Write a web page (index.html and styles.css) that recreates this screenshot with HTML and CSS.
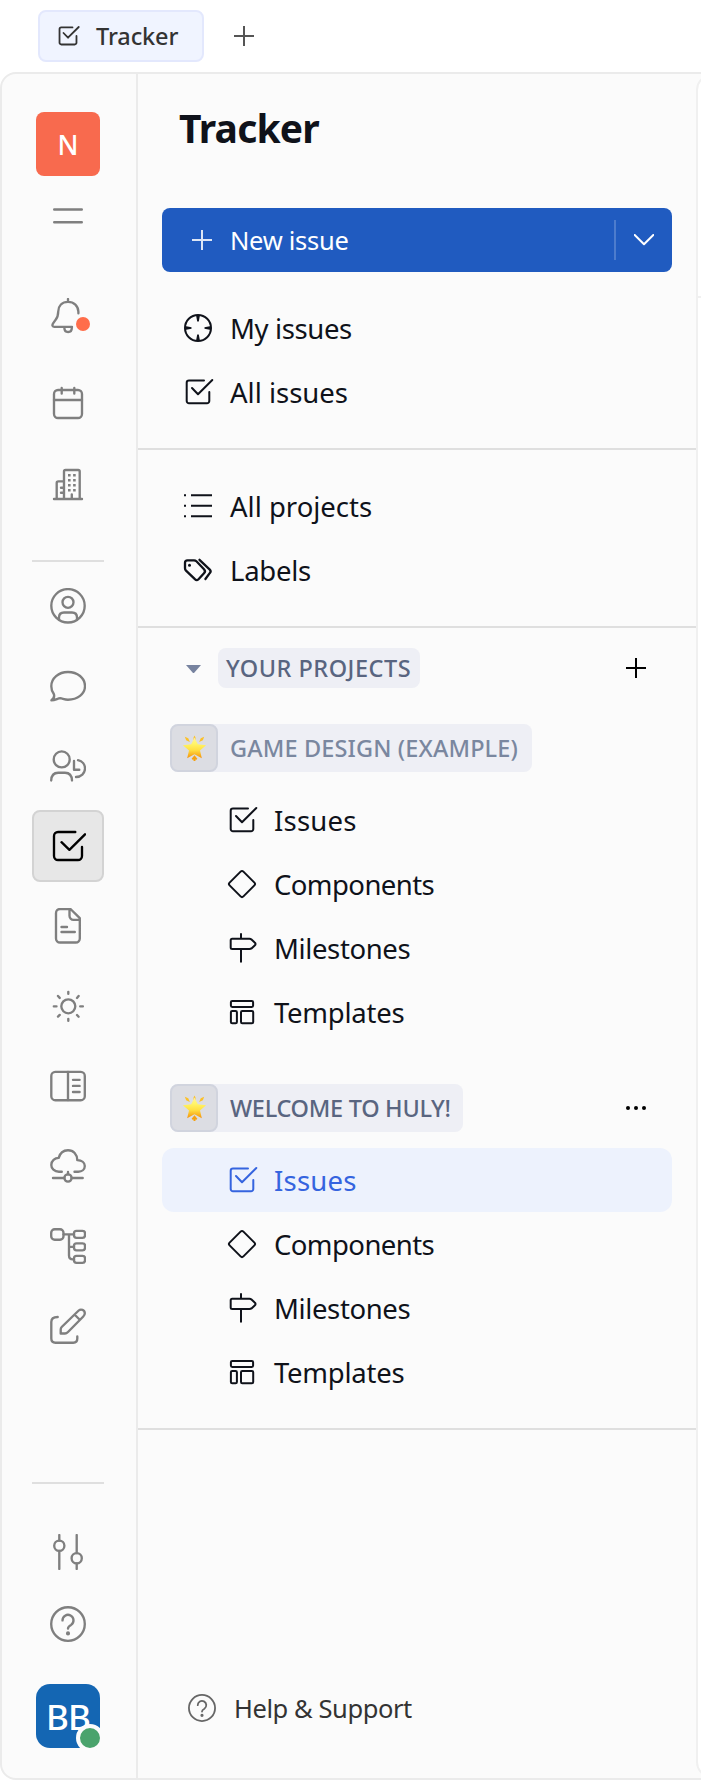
FILE: index.html
```html
<!DOCTYPE html>
<html lang="en">
<head>
<meta charset="utf-8">
<title>Tracker</title>
<link rel="stylesheet" href="styles.css">
</head>
<body>
<svg class="sprite" aria-hidden="true">
  <symbol id="check" viewBox="0 0 32 32"><path d="M22 4.5H7a2.3 2.3 0 0 0-2.3 2.3V25A2.3 2.3 0 0 0 7 27.3h18a2.3 2.3 0 0 0 2.3-2.3v-9M10 12l6 6.3L30.3 4"/></symbol>
  <symbol id="diamond" viewBox="0 0 32 32"><path d="M14.6 3.6q1.4-1.4 2.8 0l11 11q1.4 1.4 0 2.8l-11 11q-1.4 1.4-2.8 0l-11-11q-1.4-1.4 0-2.8z"/></symbol>
  <symbol id="milestone" viewBox="0 0 32 32"><path d="M15 2v4.7M15 17v12.7M6.2 6.7h17.3q1.2 0 2 .7l3.2 3q1.7 1.5 0 3l-3.2 3q-.8.6-2 .6H6.2q-1.5 0-1.5-1.5V8.2q0-1.5 1.5-1.5z"/></symbol>
  <symbol id="template" viewBox="0 0 32 32"><rect x="4.9" y="4.9" width="22.2" height="6" rx="1.3"/><rect x="4.9" y="15" width="6" height="12.2" rx="1.3"/><rect x="15" y="15" width="12.2" height="12.2" rx="1.3"/></symbol>
  <symbol id="help" viewBox="0 0 36 36"><circle cx="18" cy="18" r="16.8"/><path d="M12.5 14.4a5.5 5.5 0 1 1 8.6 4.5c-2 1.1-3.1 1.7-3.1 3.6"/><circle cx="18" cy="27.4" r=".9" fill="currentColor"/></symbol>
  <symbol id="plus" viewBox="0 0 20 20"><path d="M10 0v20M0 10h20"/></symbol>
  <symbol id="star" viewBox="0 0 28 28">
    <g stroke="none"><path fill="#f5a011" d="M12 25.700l-1-1L14 21l3 3.700-1 1-1-.4V27h-2v-1.700z"/><path fill="#fbc02a" d="M4 1.800l3.500 1.500 1.700 4L5.300 5.500zM24 1.800l-3.500 1.500-1.700 4 3.900-1.800zM13 2.500l1-2 1 2v3h-2z"/>
    <path fill="url(#gold)" d="M14 2.500l3.400 7.200 8.600.9-6.300 5.500 1.900 8-7.600-4.200-7.600 4.200 1.900-8L2 10.600l8.600-.9z"/></g>
  </symbol>
  <defs><linearGradient id="gold" x1="0" y1="0" x2="0" y2="1"><stop offset="0" stop-color="#fff2a0"/><stop offset=".3" stop-color="#fff568"/><stop offset=".6" stop-color="#ffe044"/><stop offset="1" stop-color="#f5920a"/></linearGradient></defs>
</svg>

<header class="tabbar">
  <div class="tab"><svg class="tab-icon"><use href="#check"/></svg><span>Tracker</span></div>
  <svg class="plus add-tab"><use href="#plus"/></svg>
</header>

<div class="frame">
  <nav class="rail">
    <div class="workspace">N</div>
    <svg class="menu" viewBox="0 0 36 20"><path d="M4.2 3.5h27.6M4.2 16.3h27.6"/></svg>
    <div class="group top">
      <div class="cell notify"><svg viewBox="0 0 36 36"><path d="M18 1v2.5M28.4 15.3V13.7C28.2 8 24 3.9 18 3.9S8.4 8 8.2 13.7c0 4.500-.5 5.500-2.700 8.200L3.100 25.400c-1.300 2-.6 3.500 1.400 3.500H22M14.400 29v1c0 2.600 1.500 4 3.700 4s3.700-1.400 3.700-4v-1"/></svg><i class="dot"></i></div>
      <div class="cell"><svg viewBox="0 0 36 36"><rect x="4" y="5" width="28" height="28" rx="4"/><path d="M4 15h28M11.700 3v5.500M24.300 3v5.500"/></svg></div>
      <div class="cell"><svg viewBox="0 0 36 36"><path d="M4 32h28M14 32V4.500Q14 3 15.500 3h12.700q1.500 0 1.500 1.500V32M6.700 32V16q0-1.600 1.600-1.600H14M11 20.700h3M11 25.700h3M21.800 27.300V32"/><path class="windows" d="M18 8.300h2.600m2.500 0h2.600M18 13.300h2.600m2.500 0h2.600M18 18.300h2.600m2.500 0h2.600M18 23.300h2.600m2.500 0h2.600"/></svg></div>
    </div>
    <div class="rule"></div>
    <div class="group apps">
      <div class="cell"><svg viewBox="0 0 36 36"><circle cx="18" cy="17.800" r="16.700"/><circle cx="18" cy="14.300" r="5.500"/><path d="M9 31.500V29.500q0-5 5-5h8q5 0 5 5v2"/></svg></div>
      <div class="cell"><svg viewBox="0 0 36 36"><path d="M1.400 32.200C4.500 30.200 4.600 28 3.700 25.800C2 23.500 1.300 21 1.300 18.200C1.300 10.200 8.500 4 18 4S35 10 35 18S27.500 31.700 18 31.700c-3.500 0-5.500-1.300-7.800-1.500c-2.700.2-4.700 2-8.800 2z"/></svg></div>
      <div class="cell"><svg viewBox="0 0 36 36"><circle cx="11.700" cy="11.400" r="8"/><path d="M1.200 32.500c.2-5.500 2.800-7.800 7-7.800H15c4.200 0 6.800 2.300 7 7.800M24 13v8.700h5.300M28 12.200c4.500 1 7 4.500 7 8.200 0 5-4 8.600-9 8.600"/></svg></div>
      <div class="cell active"><svg viewBox="0 0 36 36"><path d="M25.300 4H8a4 4 0 0 0-4 4v20a4 4 0 0 0 4 4h20a4 4 0 0 0 4-4v-9M11.500 14.200l7.900 7.600L35 6.300"/></svg></div>
      <div class="cell"><svg viewBox="0 0 36 36"><path d="M20.500 1H10a4 4 0 0 0-4 4v25.500a4 4 0 0 0 4 4h15.800a4 4 0 0 0 4-4V10.200zM19.500 1v6.800a4 4 0 0 0 4 4h6.300M11.500 19h5.500M11.500 24h13.300"/></svg></div>
      <div class="cell"><svg viewBox="0 0 36 36"><circle cx="18.300" cy="18.300" r="7"/><path d="M18.300 3.800v2M18.300 30.800v2M3.800 18.300h2.700M30.200 18.300h2.700M8 8l1.700 1.900M27 27l1.600 1.700M8 28.600l1.700-1.700M27 9.900L28.600 8"/></svg></div>
      <div class="cell"><svg viewBox="0 0 36 36"><rect x="1.300" y="3.900" width="33.500" height="28.300" rx="4"/><path d="M18 4v28M23 11.800h6.600M23 17.900h6.600M23 24h6.600"/></svg></div>
      <div class="cell"><svg viewBox="0 0 36 36"><path d="M11.800 23.700H9c-4.700 0-7.700-3-7.700-6.800 0-4.200 3.500-7 7.400-7C10 5 13.500 2.200 18 2.200c5.500 0 9.200 4.100 9.300 10 4.500.2 7.500 2.500 7.500 5.800 0 3.500-3 5.700-6.500 5.700h-3.800M18 24v2.300M3 30h11.300M21.700 30h11"/><circle cx="18" cy="30" r="3.600"/></svg></div>
      <div class="cell"><svg viewBox="0 0 36 36"><rect x="1.200" y="1.200" width="12.300" height="10.500" rx="3.500"/><rect x="24" y="2.800" width="11" height="7" rx="2.500"/><rect x="24" y="15.300" width="11" height="7" rx="2.500"/><rect x="24" y="27.800" width="11" height="7" rx="2.500"/><path d="M13.500 6.300H24M19 6.300V27.500q0 3.900 3.900 3.900H24M19 18.800h5"/></svg></div>
      <div class="cell"><svg viewBox="0 0 36 36"><path d="M7.700 9q-6.400 0-6.400 5v16.500q0 4.200 4.200 4.200h17.800q4 0 4-4.200v-2M10.700 25.500v-4q0-1.500 1-2.500L28.700 2.500c2-1.800 6.100-.8 6.100 2.800q0 1.800-1.500 3.200L18 24q-1.500 1.500-3 1.500zM24.500 6.500l5 5"/></svg></div>
    </div>
    <div class="rule foot-rule"></div>
    <div class="group foot">
      <div class="cell"><svg viewBox="0 0 36 36"><path d="M9.300 1v5.500M9.300 17v18M26.700 1v18M26.700 29.500V35"/><circle cx="9.300" cy="11.700" r="5.100"/><circle cx="26.700" cy="24.200" r="5.100"/></svg></div>
      <div class="cell"><svg><use href="#help"/></svg></div>
    </div>
    <div class="avatar">BB<i class="presence"></i></div>
  </nav>

  <aside class="panel">
    <h1>Tracker</h1>
    <div class="new-issue">
      <svg class="plus"><use href="#plus"/></svg><span>New issue</span>
      <div class="split"><svg viewBox="0 0 20 12"><path d="M.7 1L10 10.300 19.300 1"/></svg></div>
    </div>
    <div class="list issues">
      <div class="item"><svg class="ic" viewBox="0 0 32 32"><circle cx="16" cy="16" r="13"/><path class="solid" d="M14 3h4L16.800 9.500h-1.600zM14 29h4L16.800 22.500h-1.600zM3 14v4L9.500 16.800v-1.600zM29 14v4L22.500 16.800v-1.600z"/></svg><span class="tight">My issues</span></div>
      <div class="item"><svg class="ic"><use href="#check"/></svg><span>All issues</span></div>
    </div>
    <div class="list">
      <div class="item"><svg class="ic" viewBox="0 0 32 32"><path class="butt" d="M9 5.300h21M9 15.700h21M9 26.300h21M2 5.300h2M2 15.700h2M2 26.300h2"/></svg><span>All projects</span></div>
      <div class="item"><svg class="ic" viewBox="0 0 32 32"><path class="bold" d="M3 8.800q0-2.500 2.500-2.500H12q1.400 0 2.400 1L22 15.200q2 2 0 4l-5.500 6q-1.800 1.800-3.600 0L4 16.700q-1-1-1-2.400zM17.500 5.800l10.300 9.800q1.600 1.600.1 3.300L23.400 25"/><circle class="solid" cx="7.500" cy="11.300" r="1.500"/></svg><span class="snug">Labels</span></div>
    </div>
    <section class="projects">
      <div class="section-head"><i class="caret"></i><span class="pill">YOUR PROJECTS</span><svg class="plus end"><use href="#plus"/></svg></div>

      <div class="project-head"><span class="project"><i class="emoji"><svg><use href="#star"/></svg></i><b>GAME DESIGN (EXAMPLE)</b></span></div>
      <div class="children">
        <div class="item"><svg class="ic"><use href="#check"/></svg><span class="loose">Issues</span></div>
        <div class="item"><svg class="ic"><use href="#diamond"/></svg><span class="tighter">Components</span></div>
        <div class="item"><svg class="ic"><use href="#milestone"/></svg><span class="tight">Milestones</span></div>
        <div class="item"><svg class="ic"><use href="#template"/></svg><span class="snug">Templates</span></div>
      </div>

      <div class="project-head second"><span class="project current"><i class="emoji"><svg><use href="#star"/></svg></i><b>WELCOME TO HULY!</b></span><svg class="more" viewBox="0 0 20 4"><circle class="solid" cx="2" cy="2" r="2"/><circle class="solid" cx="10" cy="2" r="2"/><circle class="solid" cx="18" cy="2" r="2"/></svg></div>
      <div class="children">
        <div class="item selected"><svg class="ic"><use href="#check"/></svg><span class="loose">Issues</span></div>
        <div class="item"><svg class="ic"><use href="#diamond"/></svg><span class="tighter">Components</span></div>
        <div class="item"><svg class="ic"><use href="#milestone"/></svg><span class="tight">Milestones</span></div>
        <div class="item"><svg class="ic"><use href="#template"/></svg><span class="snug">Templates</span></div>
      </div>
    </section>
    <div class="support"><svg><use href="#help"/></svg><span>Help &amp; Support</span></div>
  </aside>
  <main class="content"><div class="content-head"></div></main>
</div>
</body>
</html>
```
FILE: styles.css
```css
* { box-sizing: border-box; }
body {
  margin: 0;
  width: 701px;
  height: 1780px;
  overflow: hidden;
  background: #fff;
  font-family: "Noto Sans", "Open Sans", sans-serif;
  color: #0f121a;
}
svg {
  display: block;
  flex: none;
  fill: none;
  stroke: currentColor;
  stroke-width: 2;
  stroke-linecap: round;
  stroke-linejoin: round;
}
.sprite { position: absolute; width: 0; height: 0; }
.solid { fill: currentColor; stroke: none; }
.bold { stroke-width: 2.3; }
.butt { stroke-linecap: butt; }
span, b { white-space: nowrap; }
.plus { width: 20px; height: 20px; stroke-linecap: butt; }

/* Tracking */
.loose { letter-spacing: .2px; }
.snug { letter-spacing: -.25px; }
.tight { letter-spacing: -.38px; }
.tighter { letter-spacing: -.58px; }

/* Tabs */
.tabbar { height: 72px; padding: 10px 0 10px 38px; display: flex; }
.tab {
  width: 166px;
  height: 52px;
  padding-left: 16px;
  display: flex;
  align-items: center;
  gap: 16px;
  border: 2px solid #e3e8fd;
  border-radius: 8px;
  background: #f0f4ff;
  color: #333;
  font-size: 23.5px;
  font-weight: 500;
  letter-spacing: -.1px;
}
.tab-icon { width: 24px; height: 24px; stroke-width: 2.4; }
.add-tab { margin: 16px 0 0 30px; color: #555; }

/* Frame */
.frame {
  width: 730px;
  height: 1708px;
  display: flex;
  border: 2px solid #ebebeb;
  border-radius: 16px;
  background: #fbfbfb;
}
.rail {
  width: 136px;
  flex: none;
  padding: 38px 0 30px;
  border-right: 2px solid #ebebeb;
  display: flex;
  flex-direction: column;
  align-items: center;
  color: #7f7f7f;
}
.rail > * { margin-right: 2px; }
.workspace, .avatar {
  width: 64px;
  height: 64px;
  flex: none;
  display: grid;
  place-items: center;
  color: #fff;
  font-weight: 500;
}
.workspace { border-radius: 8px; background: #f86a4e; font-size: 27px; }
.menu { width: 36px; height: 20px; margin-top: 30px; stroke-width: 2.4; }
.group { display: flex; flex-direction: column; }
.cell { width: 72px; height: 72px; display: grid; place-items: center; }
.cell svg { width: 36px; height: 36px; stroke-width: 2.35; }
.top { margin-top: 54px; }
.top .cell + .cell { margin-top: 15px; }
.top .cell:last-child { margin-top: 10px; }
.windows { stroke-width: 2.6; stroke-linecap: butt; }
.notify { position: relative; }
.dot {
  position: absolute;
  left: 44px;
  top: 37px;
  width: 14px;
  height: 14px;
  border-radius: 50%;
  background: #ff6d4a;
}
.rule { width: 72px; height: 2px; flex: none; background: #dfdfdf; }
.top + .rule { margin-top: 39px; }
.apps { margin-top: 8px; gap: 8px; }
.active { border: 2px solid #d3d3d3; border-radius: 8px; background: #e7e7e7; color: #000; }
.foot-rule { margin-top: auto; }
.foot { margin-top: 32px; }
.avatar {
  position: relative;
  margin-top: 24px;
  border-radius: 14px;
  background: #1466b3;
  font-size: 35px;
  letter-spacing: -1px;
}
.presence {
  position: absolute;
  right: -4px;
  bottom: -4px;
  width: 28px;
  height: 28px;
  border: 4px solid #fbfbfb;
  border-radius: 50%;
  background: #4aa36c;
}

/* Navigation panel */
.panel { width: 558px; flex: none; display: flex; flex-direction: column; }
h1 {
  margin: 24px 0 0 41px;
  height: 60px;
  line-height: 60px;
  font-size: 39px;
  font-weight: 700;
  letter-spacing: -.8px;
}
.new-issue {
  margin: 50px 24px 0;
  height: 64px;
  flex: none;
  padding-left: 30px;
  display: flex;
  align-items: center;
  gap: 18px;
  border-radius: 8px;
  background: #205bc0;
  color: #fff;
  font-size: 25.5px;
  letter-spacing: -.28px;
}
.new-issue .plus { opacity: .85; }
.split {
  margin-left: auto;
  width: 58px;
  height: 40px;
  display: grid;
  place-items: center;
  border-left: 2px solid #4d7ccd;
}
.split svg { width: 20px; height: 12px; }
.list { padding: 24px; border-bottom: 2px solid #dfdfdf; }
.item {
  height: 64px;
  padding-left: 20px;
  display: flex;
  align-items: center;
  gap: 16px;
  border-radius: 12px;
  font-size: 27.5px;
}
.ic { width: 32px; height: 32px; }
.projects { padding: 20px 24px 24px; border-bottom: 2px solid #dfdfdf; }
.section-head { height: 40px; padding: 0 26px 0 24px; display: flex; align-items: center; }
.caret {
  margin: 2px 17px 0 0;
  border: 7.5px solid transparent;
  border-width: 8px 7.5px 0;
  border-top-color: #77839f;
  width: 15px;
}
.pill {
  height: 40px;
  width: 202px;
  margin-left: auto;
  margin-right: 206px;
  line-height: 40px;
  padding-left: 8px;
  border-radius: 8px;
  background: #eeeff5;
  color: #596580;
  font-size: 23.5px;
  font-weight: 500;
  letter-spacing: .5px;
}
.section-head .plus { margin-left: 0; }
.end, .more { margin-left: auto; color: #000; }
.project-head { margin: 36px 0 16px; height: 48px; padding: 0 26px 0 8px; display: flex; align-items: center; }
.second { margin-top: 40px; }
.project {
  height: 48px;
  width: 362px;
  display: flex;
  align-items: center;
  gap: 12px;
  border-radius: 8px;
  background: #eeeff5;
  color: #7a879f;
  font-size: 23.5px;
  letter-spacing: .13px;
}
.project b { font-weight: 500; }
.current { width: 293px; color: #596580; letter-spacing: -.28px; }
.emoji {
  width: 48px;
  height: 48px;
  display: grid;
  place-items: center;
  border: 2px solid #d1d4de;
  border-radius: 8px;
  background: #dcdde3;
}
.emoji svg { width: 27px; height: 27px; }
.more { width: 20px; height: 4px; }
.children .item { padding-left: 64px; }
.children .selected { background: #edf2fd; color: #3564df; }
.support {
  margin: auto 0 38px 50px;
  height: 64px;
  display: flex;
  align-items: center;
  gap: 18px;
  color: #333;
  font-size: 25.5px;
  letter-spacing: -.42px;
}
.support svg { width: 28px; height: 28px; color: #666; stroke-width: 2.3; }

/* Content edge */
.content {
  flex: 1;
  border: 2px solid #f0f0f0;
  border-radius: 16px 0 0 16px;
  background: #fff;
}
.content-head { height: 222px; border-bottom: 2px solid #f0f0f0; }
```
